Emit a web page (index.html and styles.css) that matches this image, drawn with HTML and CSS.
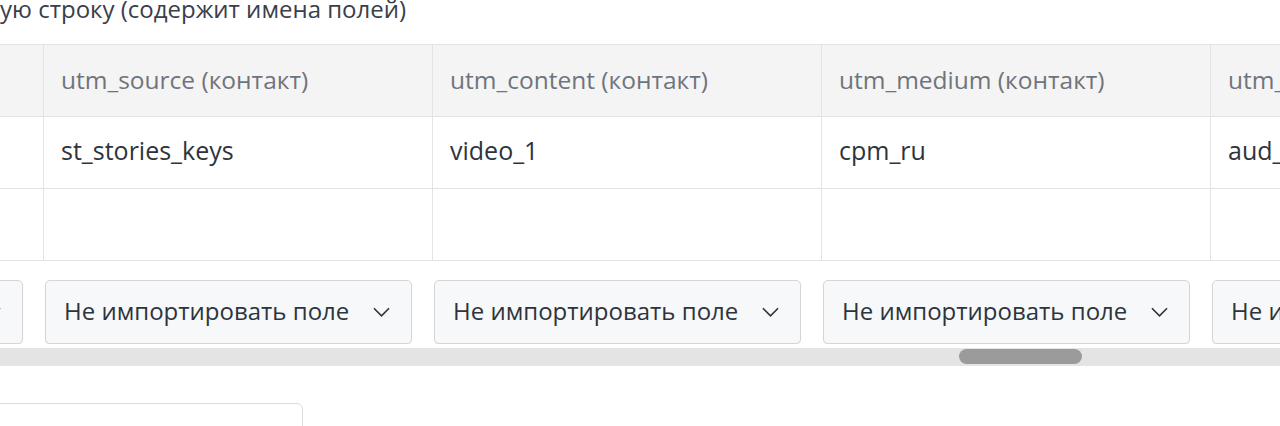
FILE: index.html
```html
<!DOCTYPE html>
<html lang="ru">
    <head>
        <meta charset="UTF-8">
        <title>Импорт контактов</title>
        <meta name="viewport" content="width=device-width, initial-scale=1.0">
        <link rel="stylesheet" href="styles.css">
    </head>
    <body>
        <p class="hint">ую строку (содержит имена полей)</p>

        <div class="viewport">
            <div class="sheet">
                <div class="grid">
                    <div class="cell head">utm_campaign (контакт)</div>
                    <div class="cell head">utm_source (контакт)</div>
                    <div class="cell head">utm_content (контакт)</div>
                    <div class="cell head">utm_medium (контакт)</div>
                    <div class="cell head">utm_term (контакт)</div>

                    <div class="cell">stories</div>
                    <div class="cell">st_stories_keys</div>
                    <div class="cell">video_1</div>
                    <div class="cell">cpm_ru</div>
                    <div class="cell">aud_1</div>

                    <div class="cell"></div>
                    <div class="cell"></div>
                    <div class="cell"></div>
                    <div class="cell"></div>
                    <div class="cell"></div>
                </div>

                <div class="selects">
                    <div class="slot"><div class="select"><span>Не импортировать поле</span><svg class="chev" viewBox="0 0 18 10"><path d="M1 1l8 8 8-8"/></svg></div></div>
                    <div class="slot"><div class="select"><span>Не импортировать поле</span><svg class="chev" viewBox="0 0 18 10"><path d="M1 1l8 8 8-8"/></svg></div></div>
                    <div class="slot"><div class="select"><span>Не импортировать поле</span><svg class="chev" viewBox="0 0 18 10"><path d="M1 1l8 8 8-8"/></svg></div></div>
                    <div class="slot"><div class="select"><span>Не импортировать поле</span><svg class="chev" viewBox="0 0 18 10"><path d="M1 1l8 8 8-8"/></svg></div></div>
                    <div class="slot"><div class="select"><span>Не импортировать поле</span><svg class="chev" viewBox="0 0 18 10"><path d="M1 1l8 8 8-8"/></svg></div></div>
                </div>
            </div>
        </div>

        <div class="scrollbar">
            <div class="thumb"></div>
        </div>

        <div class="field"></div>
    </body>
</html>
```

FILE: styles.css
```css
body {
    font-family: "Open Sans", "Noto Sans", sans-serif;
    background-color: #fff;
    color: #2e343c;
    margin: 0;
    padding: 0;
    overflow: hidden;
}

.hint {
    margin: -8px 0 0 0;
    font-size: 24px;
    line-height: 34px;
    color: #3a4049;
}

.viewport {
    margin-top: 18px;
    overflow: hidden;
}

.sheet {
    width: 1945px;
    margin-left: -345px;
}

.grid {
    display: grid;
    grid-template-columns: repeat(5, 389px);
    border-top: 1px solid #e3e3e3;
}

.cell {
    height: 72px;
    box-sizing: border-box;
    border-right: 1px solid #e3e3e3;
    border-bottom: 1px solid #e3e3e3;
    padding: 0 17px 5px 17px;
    display: flex;
    align-items: center;
    font-size: 25px;
    white-space: nowrap;
    overflow: hidden;
}

.head {
    background-color: #f4f4f4;
    color: #6f747c;
    font-size: 24.5px;
    padding-bottom: 2px;
}

.selects {
    display: grid;
    grid-template-columns: repeat(5, 389px);
    padding-top: 19px;
}

.slot {
    padding-left: 1px;
}

.select {
    width: 367px;
    height: 64px;
    box-sizing: border-box;
    border: 1px solid #d3d5d8;
    border-radius: 5px;
    background-color: #f7f8fa;
    box-shadow: 0 1px 1px rgba(0, 0, 0, 0.08);
    display: flex;
    align-items: center;
    justify-content: space-between;
    padding: 0 21px 3px 18px;
    font-size: 24px;
    color: #2e343c;
    white-space: nowrap;
}

.chev {
    width: 17px;
    height: 10px;
    margin-top: 3px;
    fill: none;
    stroke: #2e343c;
    stroke-width: 1.7;
}

.scrollbar {
    margin-top: 4px;
    height: 18px;
    background-color: #e4e4e4;
    padding-top: 1px;
    box-sizing: border-box;
}

.thumb {
    width: 123px;
    height: 15px;
    margin-left: 959px;
    border-radius: 8px;
    background-color: #9b9b9b;
}

.field {
    margin: 37px 0 0 -10px;
    width: 311px;
    height: 50px;
    border: 1px solid #dcdcdc;
    border-radius: 6px;
}
```
